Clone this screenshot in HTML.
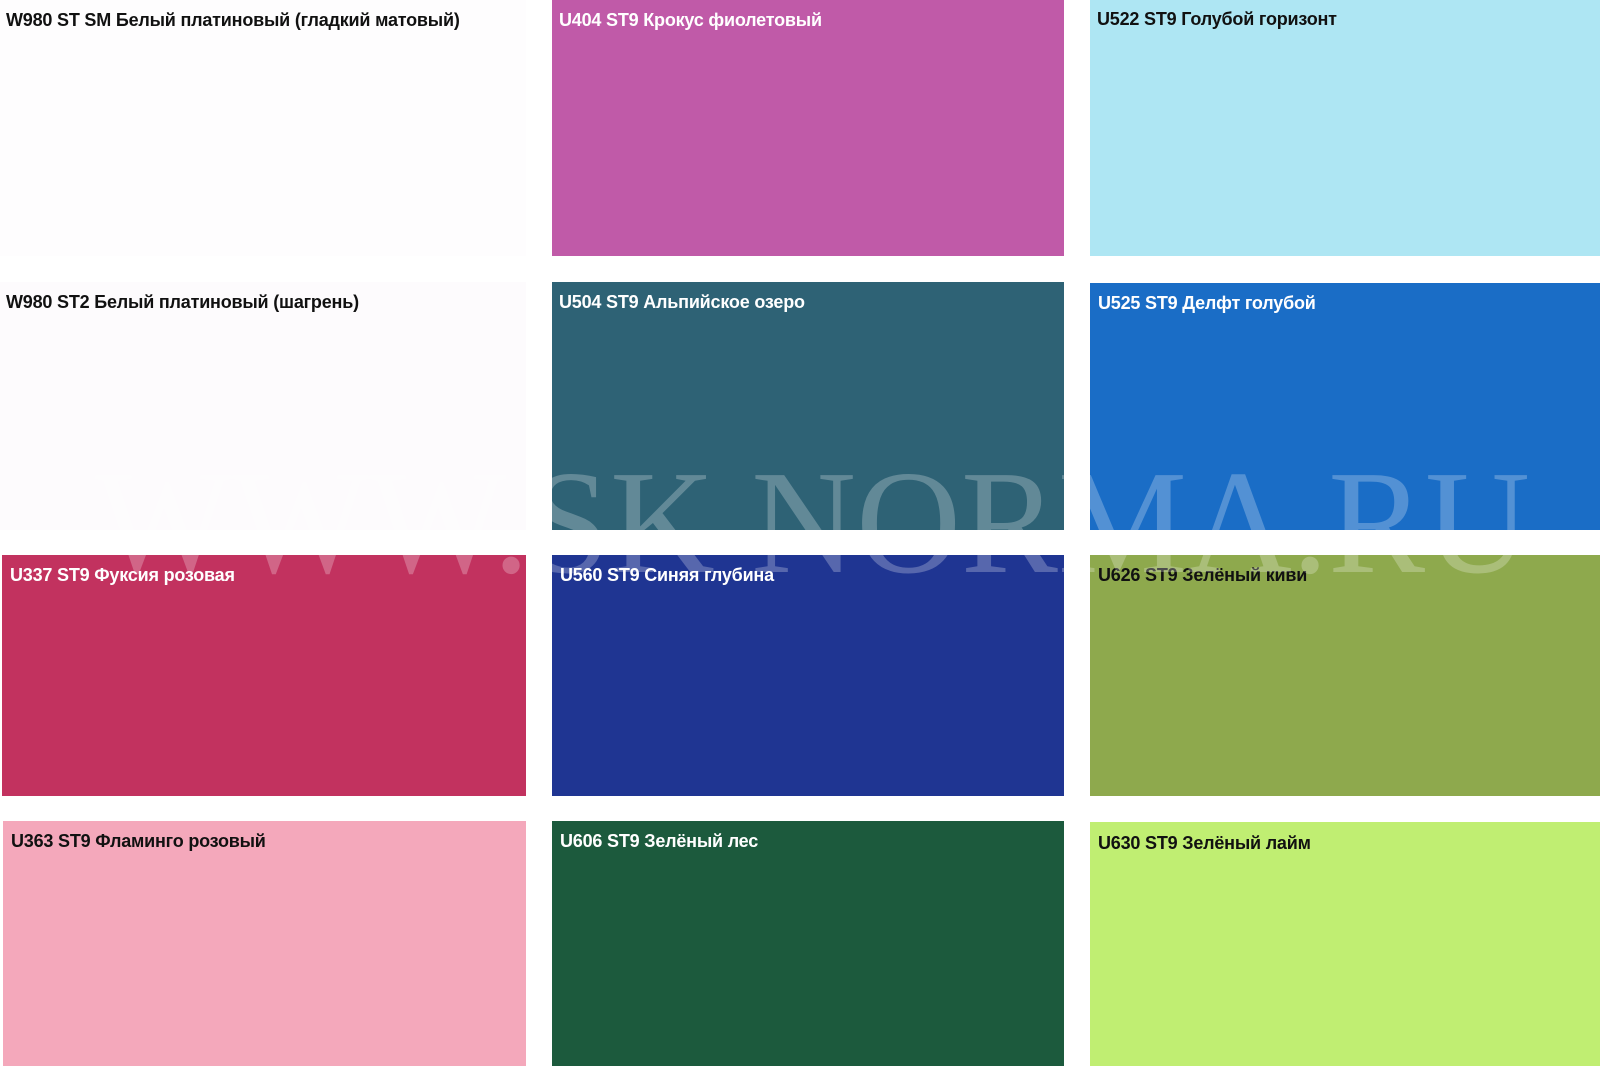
<!DOCTYPE html>
<html><head><meta charset="utf-8">
<style>
html,body{margin:0;padding:0;background:#fff;}
body{width:1600px;height:1068px;position:relative;overflow:hidden;}
.t{position:absolute;}
.l{position:absolute;left:7px;top:10px;font-family:"Liberation Sans","DejaVu Sans",sans-serif;font-weight:bold;font-size:18px;letter-spacing:-0.2px;white-space:nowrap;}
.w{color:#fff;}
.b{color:#111;}
svg{position:absolute;left:0;top:0;}
</style></head><body>
<div class="t" style="left:0;top:0;width:526px;height:256px;background:#fefdfe"><div class="l b" style="left:6px">W980 ST SM Белый платиновый (гладкий матовый)</div></div>
<div class="t" style="left:552px;top:0;width:512px;height:256px;background:#c05aa8"><div class="l w">U404 ST9 Крокус фиолетовый</div></div>
<div class="t" style="left:1090px;top:0;width:510px;height:256px;background:#aee6f3"><div class="l b" style="top:9px">U522 ST9 Голубой горизонт</div></div>

<div class="t" style="left:0;top:282px;width:526px;height:248px;background:#fdfbfd"><div class="l b" style="left:6px">W980 ST2 Белый платиновый (шагрень)</div></div>
<div class="t" style="left:552px;top:282px;width:512px;height:248px;background:#2e6275"><div class="l w">U504 ST9 Альпийское озеро</div></div>
<div class="t" style="left:1090px;top:283px;width:510px;height:247px;background:#1a6dc6"><div class="l w" style="left:8px">U525 ST9 Делфт голубой</div></div>

<div class="t" style="left:2px;top:555px;width:524px;height:241px;background:#c2325f"><div class="l w" style="left:8px">U337 ST9 Фуксия розовая</div></div>
<div class="t" style="left:552px;top:555px;width:512px;height:241px;background:#1f3592"><div class="l w" style="left:8px">U560 ST9 Синяя глубина</div></div>
<div class="t" style="left:1090px;top:555px;width:510px;height:241px;background:#8ea94d"><div class="l b" style="left:8px">U626 ST9 Зелёный киви</div></div>

<div class="t" style="left:3px;top:821px;width:523px;height:245px;background:#f4a8bb"><div class="l b" style="left:8px">U363 ST9 Фламинго розовый</div></div>
<div class="t" style="left:552px;top:821px;width:512px;height:245px;background:#1c5a3d"><div class="l w" style="left:8px">U606 ST9 Зелёный лес</div></div>
<div class="t" style="left:1090px;top:822px;width:510px;height:244px;background:#c0ee72"><div class="l b" style="left:8px;top:11px">U630 ST9 Зелёный лайм</div></div>

<svg width="1600" height="1068"><text x="95" y="572" textLength="1435" lengthAdjust="spacingAndGlyphs" font-family="Liberation Serif, serif" font-size="148" fill="rgba(255,255,255,0.25)">WWW.SK NORMA.RU</text></svg>
</body></html>
